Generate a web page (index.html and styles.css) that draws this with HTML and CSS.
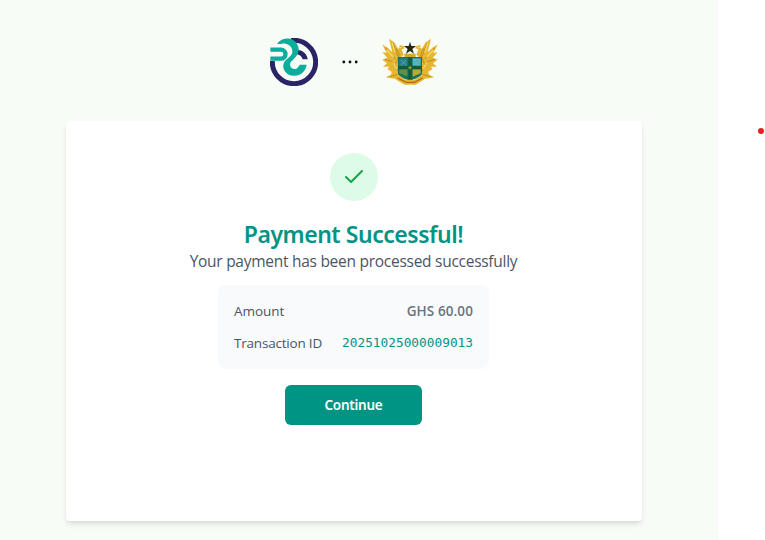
FILE: index.html
```
<!DOCTYPE html>
<html lang="en">
<head>
<meta charset="utf-8">
<title>Payment Successful</title>
<link rel="stylesheet" href="styles.css">
</head>
<body>
<main class="page">
  <header class="brands">
    <svg class="brand" viewBox="6 6 144 144" aria-hidden="true">
      <path d="M70 13.5A65 65 0 1 1 13 75" fill="none" stroke="#2a2467" stroke-width="15"/>
      <path d="M88 41C106 43 118 55 119 70H104C101 61 95 56 86 54z" fill="#2a2467"/>
      <path d="M27 23C42 4 73 0 88 25C98 45 88 61 71 75C62 83 66 99 79 99C89 99 92 91 95 86H116C113 105 99 119 78 119C51 120 36 91 53 73C65 63 74 58 73 44C71 27 54 21 42 23C36 24 31 24 27 23z" fill="#0bad9d"/>
      <path d="M7 41H39A13 13 0 0 1 39 68H7" fill="none" stroke="#0bad9d" stroke-width="13"/>
    </svg>
    <svg class="dots" viewBox="0 0 16 4" aria-hidden="true"><circle cx="1.8" cy="2" r="1.4"/><circle cx="8" cy="2" r="1.4"/><circle cx="14.2" cy="2" r="1.4"/></svg>
    <svg class="crest" viewBox="15 15 168 144" aria-hidden="true">
      <g id="supporter">
        <path d="M16 35L30 43L46 58L36 17L53 29L64 49L69 36L81 40L83 46L74 49L80 65L67 78V126L51 137L26 133L42 125L44 116L32 109L36 101L18 101L30 91L16 80L31 74L16 58L29 59z" fill="#e6b531"/>
        <path d="M25 45L54 77M47 29L63 70M24 79L46 86M58 46L67 65L55 95L65 119M38 131L61 124" fill="none" stroke="#b58521" stroke-width="2.5"/>
        <path d="M45 29L54 58M29 51L49 72M50 90L60 108M66 43L74 43" fill="none" stroke="#f8dc62" stroke-width="4"/>
      </g>
      <use href="#supporter" transform="translate(198 0) scale(-1 1)"/>
      <path d="M82 62H116V74H82z" fill="#d5a927"/>
      <path d="M99 26L103 39H117L106 48L111 62L99 54L87 62L92 48L81 39H95z" fill="#292711"/>
      <path d="M63 72H135V123C128 135 111 137 99 145C86 137 70 135 63 123z" fill="#19745a"/>
      <path d="M67 76H91V99H67z" fill="#267e91"/>
      <path d="M107 76H131V98H107z" fill="#56b5cd"/>
      <path d="M67 109H91V130L67 121z" fill="#62904a"/>
      <path d="M107 109H131V121L107 131z" fill="#b6aa39"/>
      <path d="M99 72V143M64 104H134" stroke="#125c37" stroke-width="10"/>
      <path d="M72 81L88 96M88 81L72 96M110 93L119 82L127 93" fill="none" stroke="#6aa579" stroke-width="3"/>
      <path d="M99 98L105 104L99 110L93 104z" fill="#8a9a35"/>
      <path d="M48 132L65 127L84 140H114L133 127L150 132L139 141L116 155H83L59 141z" fill="#e4b62c"/>
      <path d="M62 135L88 148H112L137 135" fill="none" stroke="#b76727" stroke-width="4"/>
    </svg>
  </header>
  <section class="card">
    <div class="status"><svg viewBox="0 0 24 24" aria-hidden="true"><path d="M20 6L9 17l-5-5"/></svg></div>
    <h1>Payment Successful!</h1>
    <p class="message">Your payment has been processed successfully</p>
    <dl class="details">
      <div class="row"><dt class="amount-label">Amount</dt><dd class="amount">GHS 60.00</dd></div>
      <div class="row"><dt class="transaction-label">Transaction ID</dt><dd class="transaction">20251025000009013</dd></div>
    </dl>
    <button type="button">Continue</button>
  </section>
</main>
<span class="marker"></span>
</body>
</html>
```
FILE: styles.css
```
* { box-sizing: border-box; }
body { margin: 0; height: 540px; overflow: hidden; background: #fff; font-family: "Open Sans", "Noto Sans", sans-serif; }
.page { width: 718px; height: 540px; padding: 34px 10px 0 0; background: #f7fcf7; display: flex; flex-direction: column; align-items: center; }
.brands { height: 56px; display: flex; align-items: center; }
.brand { width: 48px; height: 48px; }
.dots { width: 16px; height: 4px; margin: 0 24px; fill: #111; }
.crest { width: 56px; height: 48px; }
.card { width: 576px; height: 400px; margin-top: 31px; padding: 32px 0 0; border-radius: 4px; background: #fff; box-shadow: 0 4px 6px -1px rgba(0,0,0,.1), 0 2px 4px -2px rgba(0,0,0,.1); display: flex; flex-direction: column; align-items: center; }
.status { width: 48px; height: 48px; border-radius: 50%; background: #dcfce7; display: flex; align-items: center; justify-content: center; }
.status svg { width: 24px; height: 24px; fill: none; stroke: #16a34a; stroke-width: 2; stroke-linecap: round; stroke-linejoin: round; }
h1 { margin: 17px 1px 0 0; font-family: "Noto Sans", sans-serif; font-size: 23px; line-height: 32px; font-weight: 600; letter-spacing: -.47px; color: #009485; white-space: nowrap; }
.message { margin: -1px 1px 0 0; font-size: 15.5px; line-height: 24px; letter-spacing: -.27px; color: #4b5563; white-space: nowrap; }
.details { width: 271px; height: 84px; margin: 12px 1px 0 0; padding: 16px; border-radius: 8px; background: #f9fafc; display: flex; flex-direction: column; gap: 12px; }
.row { display: flex; align-items: center; justify-content: space-between; height: 20px; white-space: nowrap; font-size: 13.5px; line-height: 20px; color: #4b5563; }
dd { margin: 0; }
.amount-label { letter-spacing: -.05px; }
.transaction-label { letter-spacing: -.2px; }
.amount { font-weight: 600; color: #6b7280; letter-spacing: .1px; }
.transaction { font-family: "DejaVu Sans Mono", monospace; font-size: 12.8px; color: #009485; }
button { width: 137px; height: 40px; margin: 16px 1px 0 0; border: 0; border-radius: 6px; padding: 0; background: #009485; color: #fff; font: 600 13.5px/20px "Noto Sans", sans-serif; letter-spacing: -.25px; }
.marker { position: absolute; left: 758px; top: 128px; width: 6px; height: 6px; border-radius: 50%; background: #e91f1f; }
```
